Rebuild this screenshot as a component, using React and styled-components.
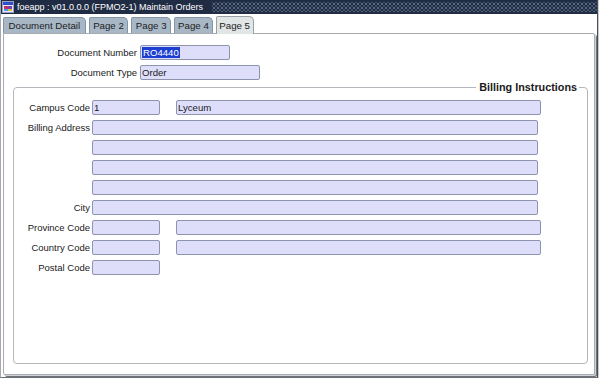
import React from 'react';
import styled, { createGlobalStyle } from 'styled-components';

const GlobalStyle = createGlobalStyle`
  html, body {
    margin: 0;
    padding: 0;
    background: #ffffff;
  }
  body {
    font-family: 'Liberation Sans', Arial, sans-serif;
    color: #1a1a1a;
  }
`;

const Window = styled.div`
  width: 596px;
  height: 377px;
  display: flex;
  flex-direction: column;
  background: #ffffff;
  border-left: 1px solid #a4a8ae;
  border-right: 1px solid #4a4e56;
  border-bottom: 1px solid #6a6e74;
  box-shadow: 1px 0 0 #c8ccd0;
`;

const TitleBar = styled.div`
  height: 14px;
  display: flex;
  align-items: center;
  gap: 3px;
  padding-left: 1px;
  background: #1f2c44;
  color: #ffffff;
  font-size: 9px;
  white-space: nowrap;
`;

const TitleText = styled.span`
  line-height: 14px;
`;

const Dots = styled.div`
  flex: 1;
  align-self: stretch;
  margin: 2px 0 2px 6px;
  background-image:
    radial-gradient(circle, #7886a2 0.6px, transparent 0.9px),
    radial-gradient(circle, #56647e 0.6px, transparent 0.9px);
  background-size: 4px 4px, 4px 4px;
  background-position: 0 0, 2px 2px;
`;

const TabStrip = styled.div`
  height: 19px;
  display: flex;
  align-items: flex-end;
  gap: 3px;
  padding-left: 2px;
`;

const Tab = styled.div`
  height: ${p => (p.$active ? '17px' : '15px')};
  padding: 0 ${p => p.$pad}px;
  display: flex;
  align-items: center;
  font-size: 9.7px;
  color: #1c1c1c;
  background: ${p => (p.$active ? '#e2e5e6' : '#a8b7c6')};
  border: 1px solid ${p => (p.$active ? '#9aa0a6' : '#8394a6')};
  border-bottom: none;
  border-radius: 2px 5px 0 0;
  margin-bottom: ${p => (p.$active ? '-1px' : '0')};
  position: relative;
  z-index: ${p => (p.$active ? 2 : 1)};
`;

const Panel = styled.div`
  flex: 1;
  display: flex;
  flex-direction: column;
  margin: 0 2px 2px 2px;
  padding: 11px 6px 10px 9px;
  border: 1px solid #a8acb0;
  box-shadow: 1px 1px 0 #d0d4d8, 2px 2px 0 #707478;
  border-radius: 0 2px 2px 2px;
`;

const HeaderGrid = styled.div`
  display: grid;
  grid-template-columns: 124px auto;
  column-gap: 3px;
  row-gap: 5px;
  justify-content: start;
`;

const Label = styled.div`
  font-size: 9.5px;
  line-height: 15px;
  text-align: right;
  white-space: nowrap;
`;

const Field = styled.div`
  width: ${p => p.$w}px;
  height: 15px;
  box-sizing: border-box;
  background: #dedefa;
  border: 1px solid #8c94ae;
  border-radius: 2px;
  font-size: 9.6px;
  line-height: 13px;
  padding-left: 1px;
  white-space: nowrap;
  overflow: hidden;
`;

const Selected = styled.span`
  background: #1c3fd2;
  color: #ffffff;
  padding: 0 1px;
`;

const Group = styled.fieldset`
  flex: 1;
  margin: 1px 0 0 0;
  padding: 6px 0 0 0;
  min-width: 0;
  border: 1px solid #b4b8bc;
  border-radius: 4px;
`;

const Legend = styled.legend`
  margin-left: auto;
  margin-right: 8px;
  padding: 0 2px 0 3px;
  font-size: 10.8px;
  font-weight: bold;
  line-height: 13px;
  color: #1a1a1a;
`;

const GroupGrid = styled.div`
  display: grid;
  grid-template-columns: 76px auto;
  column-gap: 2px;
  row-gap: 5px;
  justify-content: start;
`;

const FieldRow = styled.div`
  display: flex;
  gap: ${p => p.$gap || 0}px;
`;

function AppIcon() {
  return (
    <svg width="12" height="12" viewBox="0 0 12 12">
      <rect x="0.5" y="0.5" width="11" height="11" fill="#e8e8f4" stroke="#9aa0c8" />
      <rect x="1" y="1" width="10" height="3" fill="#3050c8" />
      <rect x="2" y="5" width="4" height="3" fill="#c03060" />
      <rect x="6" y="5" width="4" height="3" fill="#7040b0" />
      <rect x="2" y="8" width="4" height="2" fill="#40a0e0" />
      <rect x="6" y="8" width="4" height="2" fill="#e0c040" />
    </svg>
  );
}

const tabs = [
  { label: 'Document Detail', pad: 4.5 },
  { label: 'Page 2', pad: 3.5 },
  { label: 'Page 3', pad: 3.5 },
  { label: 'Page 4', pad: 3 },
  { label: 'Page 5', pad: 2.5, active: true },
];

export default function App() {
  return (
    <>
      <GlobalStyle />
      <Window>
        <TitleBar>
          <AppIcon />
          <TitleText>foeapp : v01.0.0.0 (FPMO2-1) Maintain Orders</TitleText>
          <Dots />
        </TitleBar>
        <TabStrip>
          {tabs.map(t => (
            <Tab key={t.label} $active={t.active} $pad={t.pad}>{t.label}</Tab>
          ))}
        </TabStrip>
        <Panel>
          <HeaderGrid>
            <Label>Document Number</Label>
            <Field $w={90}><Selected>RO4440</Selected></Field>
            <Label>Document Type</Label>
            <Field $w={120}>Order</Field>
          </HeaderGrid>
          <Group>
            <Legend>Billing Instructions</Legend>
            <GroupGrid>
              <Label>Campus Code</Label>
              <FieldRow $gap={16}>
                <Field $w={68}>1</Field>
                <Field $w={365}>Lyceum</Field>
              </FieldRow>
              <Label>Billing Address</Label>
              <Field $w={446} />
              <span />
              <Field $w={446} />
              <span />
              <Field $w={446} />
              <span />
              <Field $w={446} />
              <Label>City</Label>
              <Field $w={446} />
              <Label>Province Code</Label>
              <FieldRow $gap={16}>
                <Field $w={68} />
                <Field $w={365} />
              </FieldRow>
              <Label>Country Code</Label>
              <FieldRow $gap={16}>
                <Field $w={68} />
                <Field $w={365} />
              </FieldRow>
              <Label>Postal Code</Label>
              <Field $w={68} />
            </GroupGrid>
          </Group>
        </Panel>
      </Window>
    </>
  );
}
